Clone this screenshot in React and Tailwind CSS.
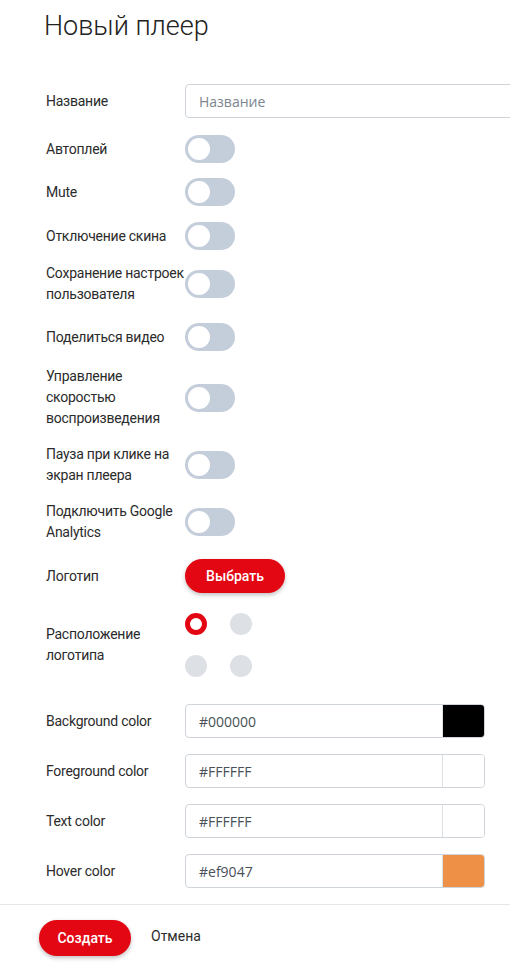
import React from 'react';

const Toggle = () => (
  <div className="w-[50px] h-[28px] rounded-full bg-[#c4cedb] p-[3px] flex items-center">
    <div className="w-[22px] h-[22px] rounded-full bg-white" />
  </div>
);

const Row = ({ label, children, className = '' }) => (
  <div className={`flex items-center ${className}`}>
    <div className="w-[139px] shrink-0 text-[14px] leading-[21px] tracking-[-0.25px] text-[#2b2b2b]">{label}</div>
    {children}
  </div>
);

const ColorInput = ({ value, swatch }) => (
  <div className="flex w-[300px] h-[34px] border border-[#ced4da] rounded-[4px] overflow-hidden">
    <div className="flex-1 flex items-center pl-[13px] text-[14px] text-[#495057] font-['Open_Sans',sans-serif]">{value}</div>
    <div className={`w-[42px] h-full border-l border-[#dee2e6] ${swatch}`} />
  </div>
);

const App = () => {
  const toggles = [
    { label: 'Автоплей', mt: 'mt-[17px]' },
    { label: 'Mute', mt: 'mt-[15px]' },
    { label: 'Отключение скина', mt: 'mt-[16px]' },
    { label: 'Сохранение настроек пользователя', mt: 'mt-[13px]' },
    { label: 'Поделиться видео', mt: 'mt-[18px]' },
    { label: 'Управление скоростью воспроизведения', mt: 'mt-[15px]' },
    { label: 'Пауза при клике на экран плеера', mt: 'mt-[15px]' },
    { label: 'Подключить Google Analytics', mt: 'mt-[15px]' },
  ];

  return (
    <div className="min-h-screen bg-white font-['Roboto',sans-serif] overflow-hidden">
      <div className="pl-[44px] pt-[6px]">
        <h1 className="text-[27px] leading-[40px] font-light text-[#222]">Новый плеер</h1>
      </div>

      <div className="pl-[46px] mt-[38px]">
        <Row label="Название">
          <div className="w-[340px] shrink-0 h-[34px] border border-[#ced4da] rounded-[4px] flex items-center pl-[13px] text-[14px] text-[#7b8591] font-['Open_Sans',sans-serif]">
            Название
          </div>
        </Row>

        {toggles.map((t) => (
          <Row key={t.label} label={t.label} className={t.mt}>
            <Toggle />
          </Row>
        ))}

        <Row label="Логотип" className="mt-[16px]">
          <button className="w-[100px] h-[34px] rounded-full bg-[#e30613] text-white text-[14px] font-medium shadow-[0_2px_4px_rgba(0,0,0,0.25)]">
            Выбрать
          </button>
        </Row>

        <Row label="Расположение логотипа" className="mt-[20px]">
          <div className="grid grid-cols-2 gap-x-[23px] gap-y-[20px] w-[67px]">
            <div className="w-[22px] h-[22px] rounded-full border-[5px] border-[#e30613] bg-white" />
            <div className="w-[22px] h-[22px] rounded-full bg-[#dde0e5]" />
            <div className="w-[22px] h-[22px] rounded-full bg-[#dde0e5]" />
            <div className="w-[22px] h-[22px] rounded-full bg-[#dde0e5]" />
          </div>
        </Row>

        <Row label="Background color" className="mt-[27px]">
          <ColorInput value="#000000" swatch="bg-black" />
        </Row>
        <Row label="Foreground color" className="mt-[16px]">
          <ColorInput value="#FFFFFF" swatch="bg-white" />
        </Row>
        <Row label="Text color" className="mt-[16px]">
          <ColorInput value="#FFFFFF" swatch="bg-white" />
        </Row>
        <Row label="Hover color" className="mt-[16px]">
          <ColorInput value="#ef9047" swatch="bg-[#ef9047]" />
        </Row>
      </div>

      <div className="mt-[16px] border-t border-[#e6e6e6]" />

      <div className="flex items-center pl-[39px] pt-[15px] gap-[20px]">
        <button className="w-[92px] h-[36px] rounded-full bg-[#e30613] text-white text-[14px] font-medium shadow-[0_2px_4px_rgba(0,0,0,0.25)]">
          Создать
        </button>
        <span className="text-[14px] text-[#2b2b2b] -mt-[4px]">Отмена</span>
      </div>
    </div>
  );
};

export default App;
